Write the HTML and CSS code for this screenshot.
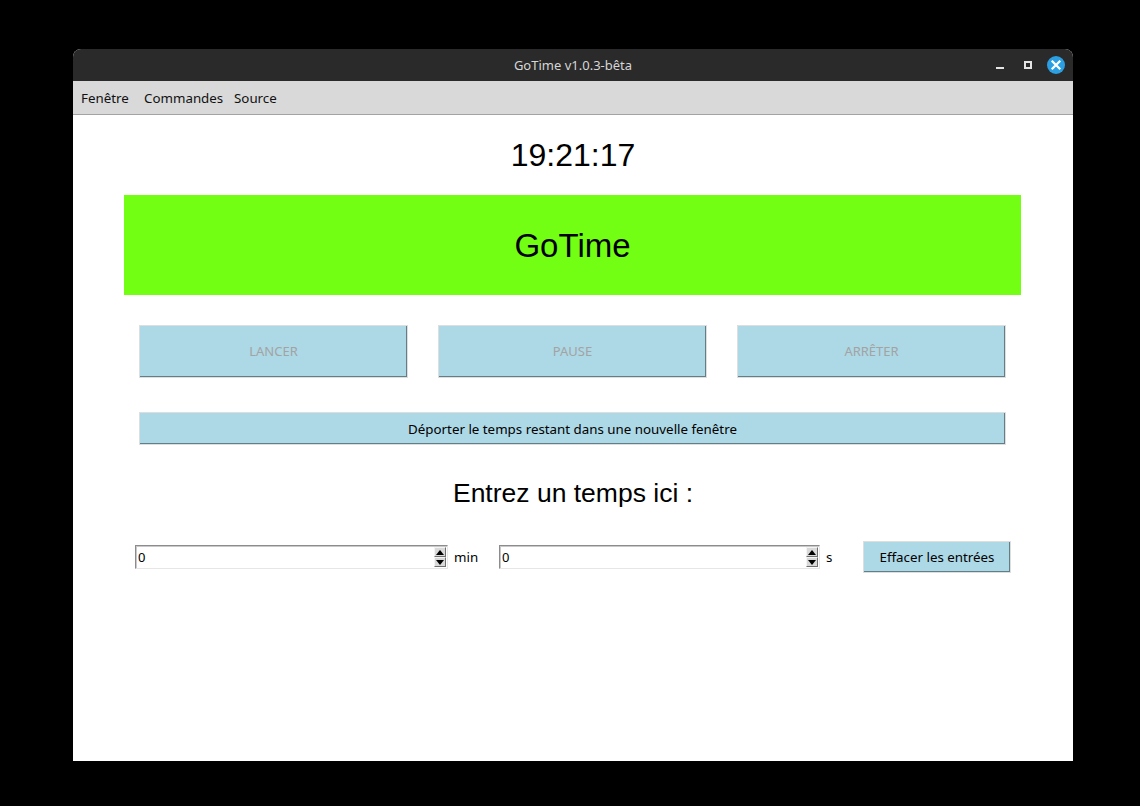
FILE: index.html
```html
<!DOCTYPE html>
<html lang="fr">
<head>
<meta charset="utf-8">
<title>GoTime</title>
<link rel="stylesheet" href="styles.css">
</head>
<body>
<div class="window">
  <div class="titlebar">
    <span class="title">GoTime v1.0.3-bêta</span>
    <div class="controls">
      <span class="ctl-min"></span>
      <span class="ctl-max"></span>
      <span class="ctl-close">
        <svg width="18" height="18" viewBox="0 0 18 18"><path d="M5.5 5.5 L12.5 12.5 M12.5 5.5 L5.5 12.5" stroke="#fff" stroke-width="2.2" stroke-linecap="square"/></svg>
      </span>
    </div>
  </div>
  <div class="menubar">
    <span class="menu-item m1">Fenêtre</span>
    <span class="menu-item m2">Commandes</span>
    <span class="menu-item">Source</span>
  </div>
  <div class="content">
    <div class="clock">19:21:17</div>
    <div class="banner">GoTime</div>
    <div class="btn-row">
      <div class="btn disabled">LANCER</div>
      <div class="btn disabled">PAUSE</div>
      <div class="btn disabled">ARRÊTER</div>
    </div>
    <div class="btn wide">Déporter le temps restant dans une nouvelle fenêtre</div>
    <div class="prompt">Entrez un temps ici :</div>
    <div class="input-row">
      <div class="spin spin-min">
        <span class="spin-val">0</span>
        <div class="spin-arrows">
          <span class="arr up"><svg width="8" height="5" viewBox="0 0 8 5"><path d="M0 5 L4 0 L8 5 Z" fill="#000"/></svg></span>
          <span class="arr down"><svg width="8" height="5" viewBox="0 0 8 5"><path d="M0 0 L4 5 L8 0 Z" fill="#000"/></svg></span>
        </div>
      </div>
      <span class="unit unit-min">min</span>
      <div class="spin spin-s">
        <span class="spin-val">0</span>
        <div class="spin-arrows">
          <span class="arr up"><svg width="8" height="5" viewBox="0 0 8 5"><path d="M0 5 L4 0 L8 5 Z" fill="#000"/></svg></span>
          <span class="arr down"><svg width="8" height="5" viewBox="0 0 8 5"><path d="M0 0 L4 5 L8 0 Z" fill="#000"/></svg></span>
        </div>
      </div>
      <span class="unit unit-s">s</span>
      <div class="btn clear">Effacer les entrées</div>
    </div>
  </div>
</div>
</body>
</html>
```
FILE: styles.css
```css
* { box-sizing: border-box; }
html, body { margin: 0; background: #000; }
body {
  width: 1140px;
  height: 806px;
  padding: 49px 67px 45px 73px;
  overflow: hidden;
  font-family: "Noto Sans", "Open Sans", sans-serif;
}
.window {
  width: 1000px;
  height: 712px;
  background: #fff;
  display: flex;
  flex-direction: column;
  border-radius: 8px 8px 0 0;
  overflow: hidden;
}
.titlebar {
  height: 32px;
  background: #2a2a2a;
  position: relative;
  display: flex;
  align-items: center;
  justify-content: center;
}
.title {
  color: #d6d6d6;
  font-size: 13px;
  line-height: 32px;
}
.controls {
  position: absolute;
  right: 8px;
  top: 7px;
  display: flex;
  align-items: flex-start;
  height: 18px;
}
.ctl-min {
  width: 8px;
  height: 2px;
  background: #e4e4e4;
  margin-top: 11px;
  margin-right: 20px;
}
.ctl-max {
  width: 8px;
  height: 8px;
  border: 2px solid #e4e4e4;
  margin-top: 5px;
  margin-right: 15px;
}
.ctl-close {
  width: 18px;
  height: 18px;
  border-radius: 50%;
  background: #2c9fe3;
  display: flex;
}
.menubar {
  height: 34px;
  background: #d9d9d9;
  border-bottom: 1px solid #a3a3a3;
  display: flex;
  align-items: center;
  padding-left: 8px;
  padding-top: 1px;
}
.menu-item {
  font-size: 13.33px;
  color: #111;
}
.m1 { width: 63px; }
.m2 { width: 90px; }
.content {
  flex: 1;
  display: flex;
  flex-direction: column;
  align-items: flex-start;
}
.clock {
  align-self: center;
  font-family: "Liberation Sans", Arial, sans-serif;
  font-size: 32px;
  line-height: 40px;
  margin-top: 20px;
  color: #000;
}
.banner {
  margin-top: 20px;
  margin-left: 51px;
  width: 897px;
  height: 100px;
  background: #72ff13;
  display: flex;
  align-items: center;
  justify-content: center;
  padding-top: 2px;
  font-family: "Liberation Sans", Arial, sans-serif;
  font-size: 33px;
  color: #000;
}
.btn {
  background: #add8e6;
  border: 1px solid #dedede;
  box-shadow: inset -1px -1px 0 #637e86;
  display: flex;
  align-items: center;
  justify-content: center;
  font-size: 13.33px;
  color: #000;
}
.btn.disabled { color: #a3a3a3; font-size: 13px; padding-bottom: 2px; }
.btn-row {
  margin-top: 30px;
  margin-left: 66px;
  width: 867px;
  display: flex;
  justify-content: space-between;
}
.btn-row .btn {
  width: 269px;
  height: 53px;
}
.btn.wide {
  margin-top: 34px;
  margin-left: 66px;
  width: 867px;
  height: 33px;
}
.prompt {
  align-self: center;
  margin-top: 31px;
  font-family: "Liberation Sans", Arial, sans-serif;
  font-size: 26.5px;
  line-height: 34px;
  color: #000;
}
.input-row {
  margin-top: 31px;
  margin-left: 62px;
  display: flex;
  align-items: center;
  height: 32px;
}
.spin {
  height: 24px;
  background: #fff;
  border-top: 1px solid #8c8c8c;
  border-left: 1px solid #8c8c8c;
  border-right: 1px solid #e6e6e6;
  border-bottom: 1px solid #e6e6e6;
  box-shadow: inset 1px 1px 0 #c9c9c9;
  display: flex;
  align-items: stretch;
  padding: 1px;
}
.spin-min { width: 313px; }
.spin-s { width: 321px; }
.spin-val {
  flex: 1;
  font-size: 13px;
  line-height: 21px;
  padding-left: 1px;
  color: #000;
}
.spin-arrows {
  width: 12px;
  display: flex;
  flex-direction: column;
}
.arr {
  flex: 1;
  background: #d9d9d9;
  border-top: 1px solid #f4f4f4;
  border-left: 1px solid #f4f4f4;
  border-right: 1px solid #6f6f6f;
  border-bottom: 1px solid #6f6f6f;
  display: flex;
  align-items: center;
  justify-content: center;
}
.unit {
  font-size: 13.33px;
  color: #000;
  padding-left: 6px;
}
.unit-min { width: 51px; }
.unit-s { width: 43px; }
.btn.clear {
  width: 148px;
  height: 32px;
}
```
